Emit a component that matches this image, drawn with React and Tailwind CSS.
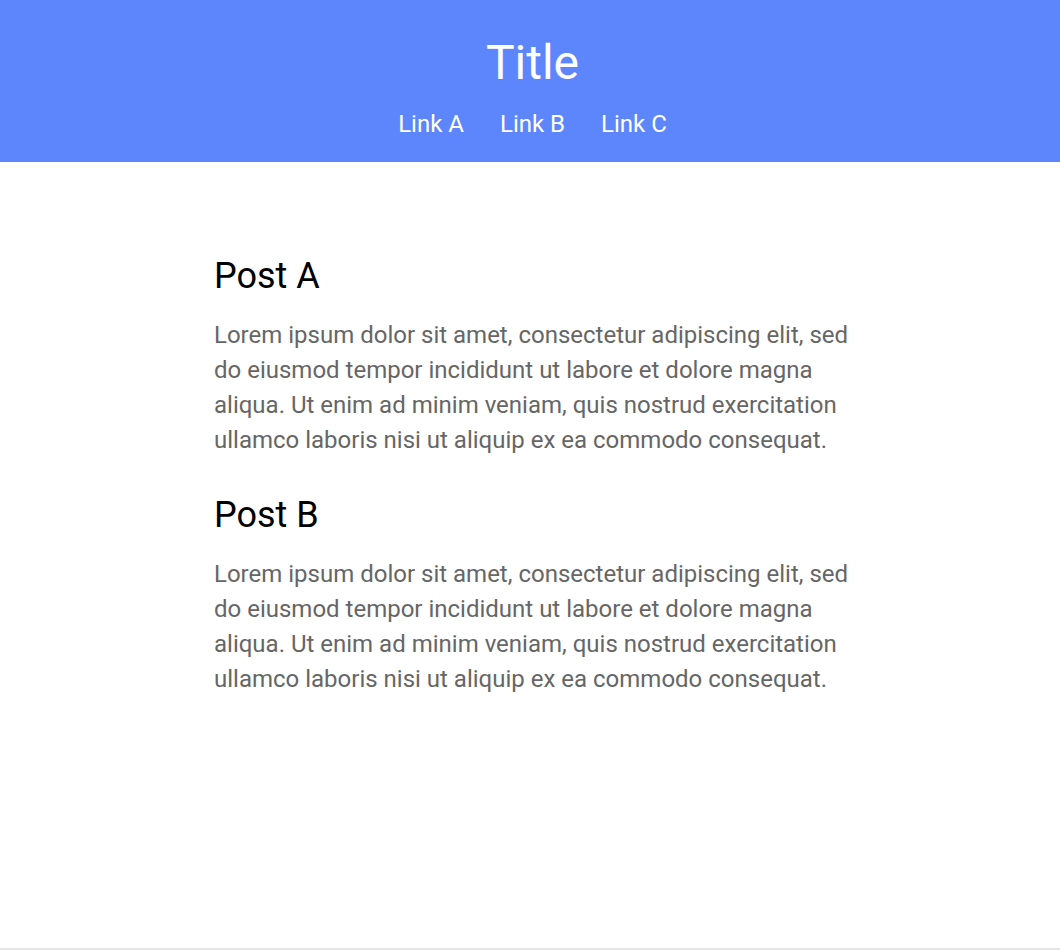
import React from "react";

const lorem =
  "Lorem ipsum dolor sit amet, consectetur adipiscing elit, sed do eiusmod tempor incididunt ut labore et dolore magna aliqua. Ut enim ad minim veniam, quis nostrud exercitation ullamco laboris nisi ut aliquip ex ea commodo consequat.";

const posts = [
  { id: "a", title: "Post A", body: lorem },
  { id: "b", title: "Post B", body: lorem },
];

const links = ["Link A", "Link B", "Link C"];

export default function App() {
  return (
    <div className="min-h-[950px] flex flex-col bg-white font-['Roboto',sans-serif]">
      {/* Header */}
      <header className="bg-[#5e86fc] pt-[35px] pb-[24px] pl-[5px] text-center text-white">
        <h1 className="text-[48px] leading-[56px]">Title</h1>
        <nav className="mt-[19px] flex justify-center gap-[36px] text-[24px] leading-[28px]">
          {links.map((l) => (
            <a key={l} href="#" className="text-white">
              {l}
            </a>
          ))}
        </nav>
      </header>

      {/* Posts */}
      <main className="flex-1 pt-[93px]">
        <div className="ml-[214px] w-[650px]">
          {posts.map((p) => (
            <article key={p.id} className="mb-[36px]">
              <h2 className="text-[36px] leading-[43px] text-black">{p.title}</h2>
              <p className="mt-[20px] text-[24px] leading-[35px] text-[#666666]">
                {p.body}
              </p>
            </article>
          ))}
        </div>
      </main>

      <div className="h-[2px] bg-[#e5e5e5]" />
    </div>
  );
}
